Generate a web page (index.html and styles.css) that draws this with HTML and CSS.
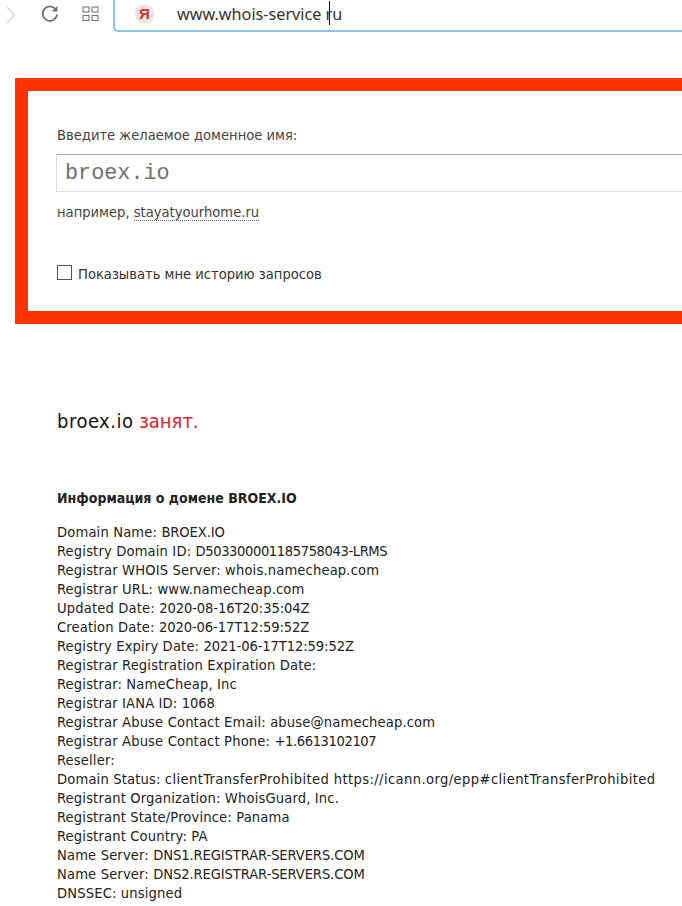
FILE: index.html
```html
<!DOCTYPE html>
<html lang="ru">
<head>
<meta charset="utf-8">
<title>whois</title>
<link rel="stylesheet" href="styles.css">
</head>
<body>
<div class="toolbar">
  <svg class="chev" width="9" height="18" viewBox="0 0 9 18"><path d="M1 1l7 8-7 8" fill="none" stroke="#d6d6d6" stroke-width="1.4"/></svg>
  <svg class="reload" width="18" height="18" viewBox="0 0 18 18"><path d="M14.8 4.6A7.2 7.2 0 1 0 16 9.6" fill="none" stroke="#6a6a6a" stroke-width="1.7"/><path d="M16.4 1v5.6h-5.6z" fill="#6a6a6a"/></svg>
  <svg class="grid" width="17" height="16" viewBox="0 0 17 16"><g fill="none" stroke="#777" stroke-width="1.1"><rect x="1" y="1" width="6" height="5"/><rect x="10" y="1" width="6" height="5"/><rect x="1" y="9.5" width="6" height="5"/><rect x="10" y="9.5" width="6" height="5"/></g></svg>
  <div class="address">
    <span class="ya">Я</span>
    <span class="url">www.whois-service<span class="caret"></span> ru</span>
  </div>
</div>
<form class="panel">
  <label class="field-label">Введите желаемое доменное имя:</label>
  <div class="domain-input">broex.io</div>
  <p class="example">например, <span class="sample">stayatyourhome.ru</span></p>
  <div class="history"><span class="box"></span><span>Показывать мне историю запросов</span></div>
</form>
<h2 class="result"><span class="name">broex.io</span> <span class="busy">занят.</span></h2>
<h3 class="info-title">Информация о домене BROEX.IO</h3>
<div class="whois">Domain Name: <span class="num">BROEX.IO</span>
Registry Domain ID: <span class="id">D503300001185758043-LRMS</span>
Registrar WHOIS Server: whois.namecheap.com
Registrar URL: www.namecheap.com
Updated Date: <span class="num">2020-08-16T20:35:04Z</span>
Creation Date: <span class="num">2020-06-17T12:59:52Z</span>
Registry Expiry Date: <span class="num">2021-06-17T12:59:52Z</span>
Registrar Registration Expiration Date:
Registrar: NameCheap, Inc
Registrar IANA ID: <span class="num">1068</span>
Registrar Abuse Contact Email: abuse@namecheap.com
Registrar Abuse Contact Phone: <span class="id">+1.6613102107</span>
Reseller:
Domain Status: <span class="status">clientTransferProhibited</span> <span class="link">https://icann.org/epp#clientTransferProhibited</span>
Registrant Organization: WhoisGuard, Inc.
Registrant State/Province: Panama
Registrant Country: PA
Name Server: <span class="num">DNS1.REGISTRAR-SERVERS.COM</span>
Name Server: <span class="num">DNS2.REGISTRAR-SERVERS.COM</span>
DNSSEC: unsigned</div>
</body>
</html>
```
FILE: styles.css
```css
html, body { margin: 0; padding: 0; background: #fff; overflow: hidden; height: 906px; }
body { font-family: "DejaVu Sans Condensed", "DejaVu Sans", sans-serif; color: #222; font-size: 14.6px; }
.toolbar { height: 32px; display: flex; align-items: flex-start; }
.chev { margin: 6px 0 0 6px; }
.reload { margin: 5px 0 0 26px; }
.grid { margin: 6px 0 0 23px; }
.address { margin-left: 14px; flex: 1; height: 32px; box-sizing: border-box; border: 2px solid #8cc3e6; border-top: 0; border-right: 0; border-radius: 0 0 0 5px; display: flex; align-items: flex-start; }
.ya { width: 19px; height: 18px; margin: 5px 0 0 20px; border-radius: 8px; background: #ebe6e4; color: #d0312d; font: bold 15px/18px "Liberation Sans", sans-serif; text-align: center; }
.url { margin: 1px 0 0 23px; font-size: 16.2px; line-height: 20px; font-family: "Noto Sans", sans-serif; color: #333; white-space: pre; }
.caret { display: inline-block; width: 1px; height: 24px; background: #111; vertical-align: -5px; margin-left: 8px; margin-right: -9px; }
.panel { margin: 46px 0 0 15px; height: 220px; border: solid #ff3300; border-width: 13px 0 13px 13px; background: #fff; padding-left: 28px; display: flow-root; }
.field-label { display: block; margin: 35px 0 0 1px; line-height: 18px; color: #444; }
.domain-input { margin-top: 10px; height: 38px; box-sizing: border-box; border: 1px solid #ddd; border-top-color: #aaa; border-right: 0; padding-left: 8px; font: 21.8px/37px "Liberation Mono", monospace; color: #707070; }
.example { margin: 11px 0 0 1px; line-height: 18px; color: #444; }
.sample { border-bottom: 1px dotted #666; }
.history { display: flex; align-items: center; gap: 6px; margin: 44px 0 0 1px; color: #333; line-height: 18px; }
.box { width: 13px; height: 13px; border: 1.5px solid #555; display: block; margin-top: -4px; }
.result { margin: 85px 0 0 57px; font-size: 20px; line-height: 24px; font-weight: normal; color: #111; }
.name { letter-spacing: .5px; }
.busy { color: #d5232a; }
.info-title { margin: 56px 0 0 57px; font-size: 14px; line-height: 19px; font-weight: bold; color: #222; }
.whois { margin: 14px 0 0 57px; line-height: 19px; white-space: pre; color: #222; letter-spacing: .15px; }
.num { letter-spacing: -.1px; }
.id { letter-spacing: -.4px; }
.status { letter-spacing: .4px; }
.link { letter-spacing: .4px; }
```
